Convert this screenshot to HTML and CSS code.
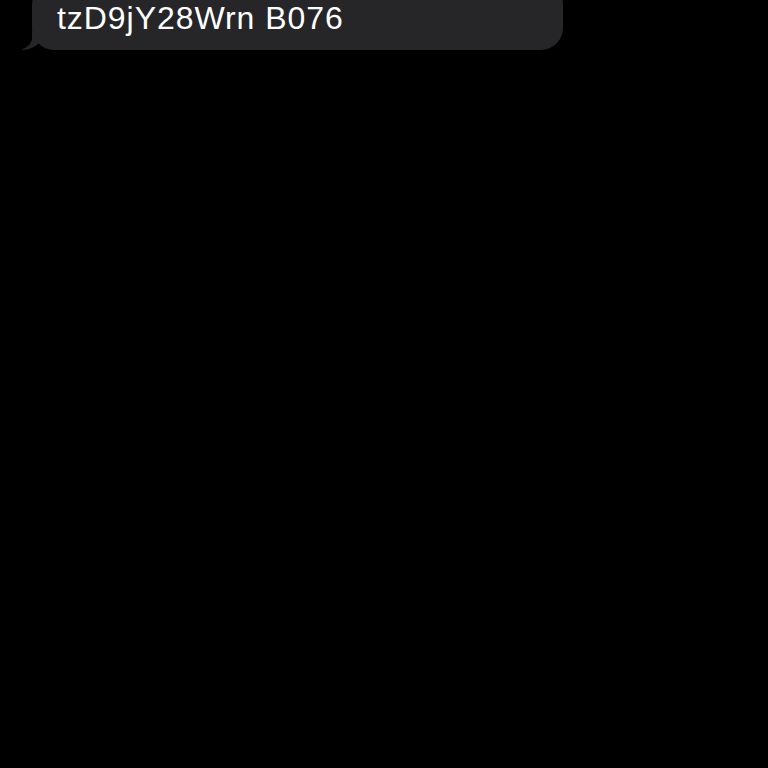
FILE: index.html
```html
<!DOCTYPE html>
<html>
<head>
<meta charset="utf-8">
<link rel="stylesheet" href="styles.css">
</head>
<body>
<div class="thread">
  <div class="bubble">
    <span class="text">tzD9jY28Wrn B076</span>
    <svg class="tail" width="30" height="19" viewBox="0 0 30 19">
      <path d="M12 0 L12 7 C12 12.5 7.5 16.5 1 18.6 C8 19.2 14.5 16.5 19 12 L19 0 Z" fill="#262629"/>
    </svg>
  </div>
</div>
</body>
</html>
```
FILE: styles.css
```css
html, body {
  margin: 0;
  padding: 0;
  background: #000;
  height: 100%;
  overflow: hidden;
}
.thread {
  display: flex;
  flex-direction: column;
  align-items: flex-start;
  padding-left: 32px;
}
.bubble {
  position: relative;
  margin-top: -17px;
  width: 531px;
  height: 67px;
  box-sizing: border-box;
  background: #262629;
  border-radius: 22px;
  padding: 17px 0 0 25px;
  display: flex;
  align-items: flex-start;
}
.text {
  font-family: "Liberation Sans", Arial, sans-serif;
  font-size: 32px;
  line-height: 36px;
  letter-spacing: 0.95px;
  color: #fff;
}
.tail {
  position: absolute;
  left: -12px;
  bottom: 0;
}
```
